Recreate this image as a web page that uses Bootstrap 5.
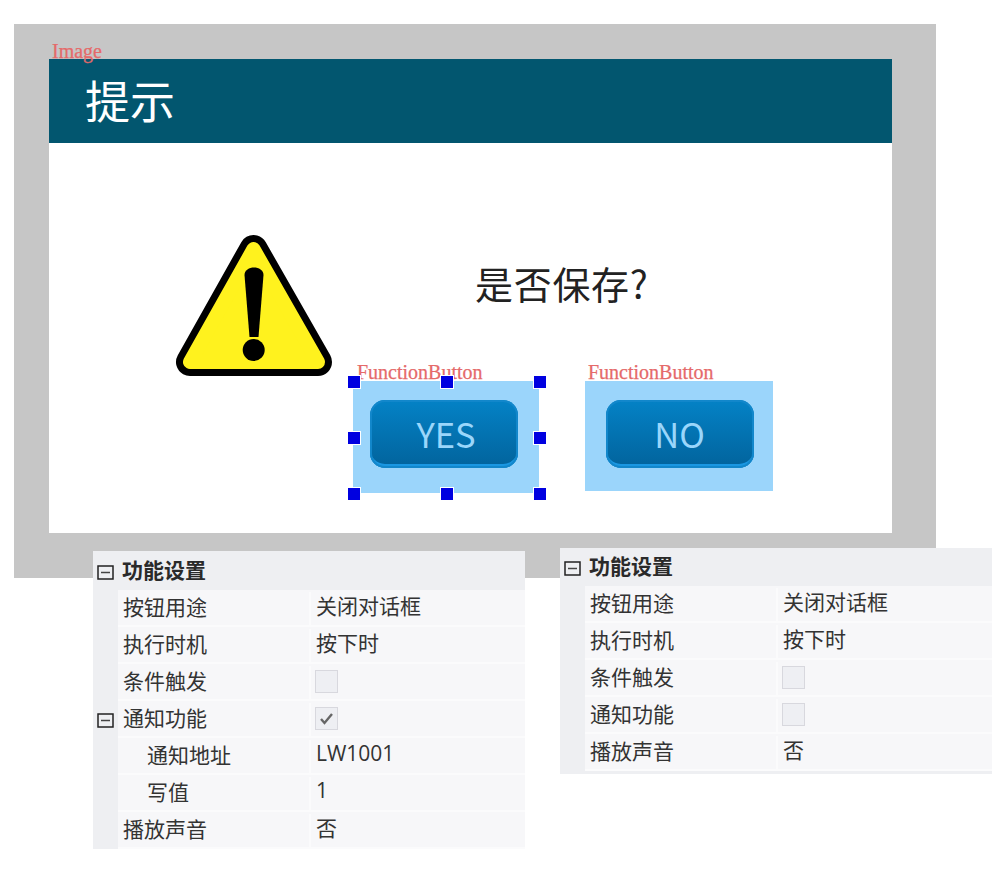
<!DOCTYPE html>
<html lang="zh"><head><meta charset="utf-8"><title>提示</title>
<link rel="stylesheet" href="https://cdn.jsdelivr.net/npm/bootstrap@5.3.0/dist/css/bootstrap.min.css">
<style>
body{margin:0;background:#fff;font-family:"Noto Sans CJK SC","Noto Sans",sans-serif;color:#2b2b2b}
.stage{width:1000px;height:870px;overflow:hidden}
.canvas-grey{left:14px;top:24px;width:922px;height:554px;background:#c6c6c6;padding:35px 44px 45px 35px}
.dlg{height:474px;background:#fff}
.dlg-head{height:84px;background:#02566f;color:#fff;font-size:45px;padding-left:36px;line-height:82px}
.tag{font-family:"Liberation Serif",serif;font-size:20px;line-height:20px;color:#e56a6a;white-space:nowrap;-webkit-text-stroke:.25px #e56a6a}
.tag-img{left:38px;top:17px}
.tag-yes{left:343px;top:338px}
.tag-no{left:574px;top:338px}
.warn{left:146px;top:196px}
.ask{left:461px;top:235px;font-size:38px;line-height:48px;color:#222;letter-spacing:.7px}
.fbox{background:#9bd5fb;display:flex;align-items:flex-start;justify-content:center}
.fyes{left:339px;top:357px;width:186px;height:112px;padding:19px 4px 0 0}
.fno{left:571px;top:357px;width:188px;height:110px;padding:19px 0 0 1px}
.fbtn{width:148px;height:68px;border:0;border-radius:15px;padding:0 0 2px;background:linear-gradient(#0482c6,#02639c);box-shadow:inset 0 0 0 2px #1287cb,inset 0 -4px 0 #1a97e2;color:#9ad6fb;font-size:34.5px;line-height:60px;font-family:"Noto Sans CJK SC",sans-serif}
.fyes .fbtn{padding-left:4px}
.grip{width:14px;height:14px;background:#0000e0;border:1px solid #fff}
.prop{width:432px;background:#eeeff2;font-size:21px;line-height:28px}
.p-left{left:93px;top:551px;height:298px}
.p-right{left:560px;top:548px;height:226px}
.prop-head{height:39px;font-weight:700;color:#2a2a2a;padding-bottom:4px}
.p-right .prop-head{height:38px}
.prop-row{height:37px;margin-left:25px;background:#f7f7f9;border-bottom:2px solid #fbfbfc;padding-bottom:3px}
.prop-key{width:191px;padding-left:5px;color:#333}
.indent{padding-left:29px}
.prop-val{padding-left:5px;color:#333;border-left:2px solid #fbfbfc;height:35px;margin-top:3px;margin-bottom:-3px;line-height:28px}
.prop-val>span{display:block;margin-top:-1px}
.latin{font-family:"Open Sans","Noto Sans CJK SC",sans-serif}
.tog{width:25px;flex:none;padding-top:3px;margin-bottom:-4px}
.tog-abs{left:4px;top:12px}
.chk{width:23px;height:23px;margin:4px 0 0 -1px;background:#eeeff3;border:1px solid #d8d8de}
</style></head>
<body>
<div class="stage position-relative">
  <div class="canvas-grey position-absolute">
    <div class="dlg"><div class="dlg-head">提示</div></div>
    <div class="tag tag-img position-absolute">Image</div>
    <svg class="warn position-absolute" width="190" height="170" viewBox="160 220 190 170" aria-hidden="true">
      <polygon points="253.5,249 190,362 318,362" fill="#000" stroke="#000" stroke-width="28" stroke-linejoin="round"/>
      <polygon points="253.5,249 190,362 318,362" fill="#fff21e" stroke="#fff21e" stroke-width="14" stroke-linejoin="round"/>
      <path d="M244.5 275c0-10 19-10 19 0l-5 62h-9z" fill="#000"/>
      <circle cx="253.7" cy="350" r="11" fill="#000"/>
    </svg>
    <div class="ask position-absolute">是否保存?</div>
    <div class="tag tag-yes position-absolute">FunctionButton</div>
    <div class="tag tag-no position-absolute">FunctionButton</div>
    <div class="fbox fyes position-absolute"><button class="fbtn" type="button">YES</button></div>
    <div class="fbox fno position-absolute"><button class="fbtn" type="button">NO</button></div>
    <div class="grip position-absolute" style="left:333px;top:351px"></div>
    <div class="grip position-absolute" style="left:426px;top:351px"></div>
    <div class="grip position-absolute" style="left:519px;top:351px"></div>
    <div class="grip position-absolute" style="left:333px;top:407px"></div>
    <div class="grip position-absolute" style="left:519px;top:407px"></div>
    <div class="grip position-absolute" style="left:333px;top:463px"></div>
    <div class="grip position-absolute" style="left:426px;top:463px"></div>
    <div class="grip position-absolute" style="left:519px;top:463px"></div>
  </div>

  <div class="prop p-left position-absolute">
    <div class="prop-head d-flex align-items-center">
      <div class="tog d-flex justify-content-center"><svg width="17" height="15" viewBox="0 0 17 15"><rect x="1" y="1" width="15" height="13" fill="none" stroke="#222" stroke-width="1.5"/><path d="M4 7.5h9" stroke="#444" stroke-width="1.5"/></svg></div>
      <div class="ps-1">功能设置</div>
    </div>
    <div class="prop-row d-flex align-items-center"><div class="prop-key">按钮用途</div><div class="prop-val"><span>关闭对话框</span></div></div>
    <div class="prop-row d-flex align-items-center"><div class="prop-key">执行时机</div><div class="prop-val"><span>按下时</span></div></div>
    <div class="prop-row d-flex align-items-center"><div class="prop-key">条件触发</div><div class="prop-val"><div class="chk"></div></div></div>
    <div class="position-relative">
      <svg class="tog-abs position-absolute" width="17" height="15" viewBox="0 0 17 15"><rect x="1" y="1" width="15" height="13" fill="none" stroke="#222" stroke-width="1.5"/><path d="M4 7.5h9" stroke="#444" stroke-width="1.5"/></svg>
      <div class="prop-row d-flex align-items-center"><div class="prop-key">通知功能</div><div class="prop-val"><div class="chk d-flex align-items-center justify-content-center"><svg width="15" height="13" viewBox="0 0 15 13"><path d="M2 7l3.5 4L13 2" fill="none" stroke="#666" stroke-width="2.4"/></svg></div></div></div>
    </div>
    <div class="prop-row d-flex align-items-center"><div class="prop-key indent">通知地址</div><div class="prop-val"><span class="latin">LW1001</span></div></div>
    <div class="prop-row d-flex align-items-center"><div class="prop-key indent">写值</div><div class="prop-val"><span class="latin">1</span></div></div>
    <div class="prop-row d-flex align-items-center"><div class="prop-key">播放声音</div><div class="prop-val"><span>否</span></div></div>
  </div>

  <div class="prop p-right position-absolute">
    <div class="prop-head d-flex align-items-center">
      <div class="tog d-flex justify-content-center"><svg width="17" height="15" viewBox="0 0 17 15"><rect x="1" y="1" width="15" height="13" fill="none" stroke="#222" stroke-width="1.5"/><path d="M4 7.5h9" stroke="#444" stroke-width="1.5"/></svg></div>
      <div class="ps-1">功能设置</div>
    </div>
    <div class="prop-row d-flex align-items-center"><div class="prop-key">按钮用途</div><div class="prop-val"><span>关闭对话框</span></div></div>
    <div class="prop-row d-flex align-items-center"><div class="prop-key">执行时机</div><div class="prop-val"><span>按下时</span></div></div>
    <div class="prop-row d-flex align-items-center"><div class="prop-key">条件触发</div><div class="prop-val"><div class="chk"></div></div></div>
    <div class="prop-row d-flex align-items-center"><div class="prop-key">通知功能</div><div class="prop-val"><div class="chk"></div></div></div>
    <div class="prop-row d-flex align-items-center"><div class="prop-key">播放声音</div><div class="prop-val"><span>否</span></div></div>
  </div>
</div>
<script src="https://cdn.jsdelivr.net/npm/bootstrap@5.3.0/dist/js/bootstrap.bundle.min.js"></script>
</body></html>
